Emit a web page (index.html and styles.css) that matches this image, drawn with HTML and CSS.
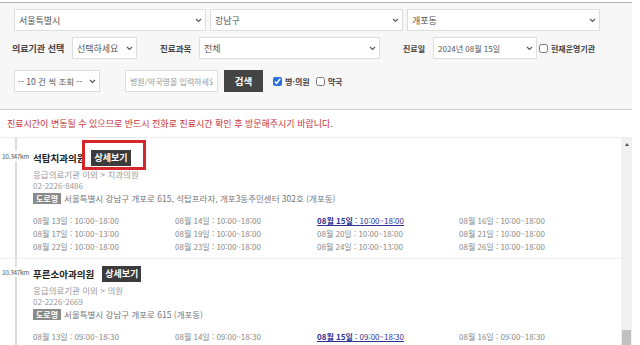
FILE: index.html
```html
<!DOCTYPE html>
<html lang="ko">
  <head>
    <meta charset="UTF-8" />
    <meta name="viewport" content="width=device-width, initial-scale=1.0" />
    <title>진료기관 조회</title>
    <link rel="stylesheet" href="styles.css">
  </head>
  <body>
    <div class="page">
      <div class="filter">
        <div class="row row1">
          <div class="sel w-sido"><span>서울특별시</span><svg class="chev" viewBox="0 0 7 5"><path d="M1 1l2.5 2.5L6 1"/></svg></div>
          <div class="sel w-gu"><span>강남구</span><svg class="chev" viewBox="0 0 7 5"><path d="M1 1l2.5 2.5L6 1"/></svg></div>
          <div class="sel w-dong"><span>개포동</span><svg class="chev" viewBox="0 0 7 5"><path d="M1 1l2.5 2.5L6 1"/></svg></div>
        </div>
        <div class="row row2">
          <label class="lbl lbl-kind">의료기관 선택</label>
          <div class="sel w-kind"><span>선택하세요</span><svg class="chev" viewBox="0 0 7 5"><path d="M1 1l2.5 2.5L6 1"/></svg></div>
          <label class="lbl lbl-dept">진료과목</label>
          <div class="sel w-dept"><span>전체</span><svg class="chev" viewBox="0 0 7 5"><path d="M1 1l2.5 2.5L6 1"/></svg></div>
          <label class="lbl lbl-day">진료일</label>
          <div class="sel w-day"><span>2024년 08월 15일</span><svg class="chev" viewBox="0 0 7 5"><path d="M1 1l2.5 2.5L6 1"/></svg></div>
          <input type="checkbox" class="chk chk-open" id="open" />
          <label class="lbl" for="open">현재운영기관</label>
        </div>
        <div class="row row3">
          <div class="sel w-count"><span>-- 10 건 씩 조회 --</span><svg class="chev" viewBox="0 0 7 5"><path d="M1 1l2.5 2.5L6 1"/></svg></div>
          <input type="text" class="keyword" placeholder="병원/약국명을 입력하세요" />
          <button class="btn">검색</button>
          <input type="checkbox" class="chk chk-hosp" id="hosp" checked />
          <label class="lbl" for="hosp">병·의원</label>
          <input type="checkbox" class="chk chk-pharm" id="pharm" />
          <label class="lbl" for="pharm">약국</label>
        </div>
      </div>

      <p class="notice">진료시간이 변동될 수 있으므로 반드시 전화로 진료시간 확인 후 방문해주시기 바랍니다.</p>

      <div class="listwrap">
        <div class="list">
          <div class="item">
            <div class="head">
              <span class="dist">10.347km</span>
              <span class="name">석탑치과의원</span>
              <span class="mark"><span class="badge">상세보기</span></span>
            </div>
            <div class="info cat">응급의료기관 이외 &gt; 치과의원</div>
            <div class="info">02-2226-8486</div>
            <div class="info addr"><span class="road">도로명</span>서울특별시 강남구 개포로 615, 석탑프라자, 개포3동주민센터 302호 (개포동)</div>
            <div class="sched">
              <span>08월 13일 : 10:00~18:00</span>
              <span>08월 14일 : 10:00~18:00</span>
              <span class="today"><b>08월 15일</b> : 10:00~18:00</span>
              <span>08월 16일 : 10:00~18:00</span>
              <span>08월 17일 : 10:00~13:00</span>
              <span>08월 19일 : 10:00~18:00</span>
              <span>08월 20일 : 10:00~18:00</span>
              <span>08월 21일 : 10:00~18:00</span>
              <span>08월 22일 : 10:00~18:00</span>
              <span>08월 23일 : 10:00~18:00</span>
              <span>08월 24일 : 10:00~13:00</span>
              <span>08월 26일 : 10:00~18:00</span>
            </div>
          </div>
          <div class="item">
            <div class="head">
              <span class="dist">10.347km</span>
              <span class="name">푸른소아과의원</span>
              <span class="badge">상세보기</span>
            </div>
            <div class="info cat">응급의료기관 이외 &gt; 의원</div>
            <div class="info">02-2226-2669</div>
            <div class="info addr"><span class="road">도로명</span>서울특별시 강남구 개포로 615 (개포동)</div>
            <div class="sched">
              <span>08월 13일 : 09:00~18:30</span>
              <span>08월 14일 : 09:00~18:30</span>
              <span class="today"><b>08월 15일</b> : 09:00~18:30</span>
              <span>08월 16일 : 09:00~18:30</span>
              <span>08월 17일 : 09:00~13:00</span>
              <span>08월 19일 : 09:00~18:30</span>
              <span>08월 20일 : 09:00~18:30</span>
              <span>08월 21일 : 09:00~18:30</span>
            </div>
          </div>
        </div>
        <div class="scroll">
          <div class="up"></div>
          <div class="thumb"></div>
        </div>
      </div>
    </div>
  </body>
</html>
```

FILE: styles.css
```css
* {
  box-sizing: border-box;
}
html,
body {
  height: 100%;
  overflow: hidden;
}
body {
  margin: 0;
  background: #fff;
  color: #555;
  font-family: "Noto Sans CJK KR", "Noto Sans", sans-serif;
  font-size: 8px;
}
.page {
  width: 632px;
  padding-top: 2px;
}

/* search filters */
.filter {
  height: 108px;
  padding: 6px 0 0 12px;
  background: #f7f7f7;
  border-top: 1px solid #b4b4b4;
  border-bottom: 1px solid #cfcfcf;
}
.row {
  display: flex;
  align-items: center;
  height: 22px;
}
.row2 {
  margin-top: 6px;
}
.row3 {
  margin-top: 11px;
}
.row1,
.row3 {
  padding-left: 2px;
}
.sel {
  display: flex;
  align-items: center;
  justify-content: space-between;
  height: 22px;
  padding: 0 3px 0 4px;
  background: #fff;
  border: 1px solid #ddd;
  color: #555;
  font-size: 9px;
  white-space: nowrap;
}
.chev {
  flex-shrink: 0;
  width: 7px;
  height: 5px;
  fill: none;
  stroke: #555;
  stroke-width: 1.1;
}
.w-sido {
  width: 192px;
}
.w-gu {
  width: 193px;
  margin-left: 4px;
}
.w-dong {
  width: 193px;
  margin-left: 4px;
}
.lbl {
  color: #444;
  font-weight: bold;
  white-space: nowrap;
}
.lbl-kind {
  width: 60px;
  font-size: 9px;
}
.w-kind {
  width: 65px;
}
.lbl-dept {
  width: 39px;
  margin-left: 23px;
  font-size: 8.5px;
}
.w-dept {
  width: 181px;
}
.lbl-day {
  width: 30px;
  margin-left: 23px;
}
.w-day {
  width: 104px;
  font-size: 8px;
}
.chk {
  width: 9px;
  height: 9px;
  margin: 0 3px 0 2px;
  accent-color: #2a6fdb;
}
.w-count {
  width: 86px;
  padding-left: 3px;
  font-size: 8.5px;
}
.keyword {
  width: 93px;
  height: 22px;
  margin-left: 25px;
  padding: 0 4px;
  border: 1px solid #ddd;
  font-family: inherit;
  font-size: 8px;
}
.keyword::placeholder {
  color: #999;
}
.btn {
  width: 39px;
  height: 22px;
  margin: 0 8px 0 6px;
  background: #444;
  color: #fff;
  border: none;
  font-family: inherit;
  font-size: 9.5px;
  font-weight: bold;
}
.chk-pharm {
  margin-left: 6px;
}

.notice {
  height: 28px;
  margin: 0;
  padding-left: 7px;
  line-height: 27px;
  color: #c8323c;
  font-size: 9px;
  border-bottom: 1px solid #ececec;
}

/* results */
.listwrap {
  display: flex;
  height: 208px;
  overflow: hidden;
}
.list {
  flex: 1;
  background: linear-gradient(to right, transparent 15px, #dcdcdc 15px, #dcdcdc 17px, transparent 17px);
}
.item {
  padding: 11px 0 5px 33px;
  border-bottom: 1px solid #f0f0f0;
}
.item + .item {
  padding-top: 6px;
}
.head {
  display: flex;
  align-items: center;
  height: 18px;
  margin-left: -31px;
}
.dist {
  width: 31px;
  align-self: flex-start;
  margin-top: 2px;
  background: #fff;
  color: #555;
  font-size: 6.5px;
  letter-spacing: -0.3px;
}
.name {
  color: #222;
  font-size: 9.5px;
  font-weight: bold;
}
.badge {
  display: inline-block;
  height: 16px;
  margin-left: 8px;
  padding: 0 3px;
  line-height: 16px;
  background: #3b3b3b;
  color: #fff;
  font-size: 9px;
  font-weight: bold;
}
/* red highlight drawn around the first detail button */
.mark {
  position: relative;
  display: inline-flex;
  margin-left: 6px;
}
.mark .badge {
  margin-left: 0;
}
.mark::after {
  content: "";
  position: absolute;
  top: -10px;
  right: -15px;
  bottom: -4px;
  left: -9px;
  border: 3px solid #d5262b;
}
.info {
  line-height: 12px;
  color: #999;
}
.cat {
  margin-top: 1px;
  font-size: 8.5px;
}
.addr {
  color: #777;
  font-size: 8.5px;
}
.road {
  display: inline-block;
  margin-right: 3px;
  padding: 0 3px;
  line-height: 11px;
  background: #8a8a8a;
  color: #fff;
  font-size: 8px;
  font-weight: bold;
}
.sched {
  display: grid;
  grid-template-columns: repeat(4, 142px);
  margin-top: 10px;
  line-height: 13px;
  color: #888;
  white-space: nowrap;
}
.today {
  color: #2e3192;
  text-decoration: underline;
}

.scroll {
  display: flex;
  flex-direction: column;
  justify-content: space-between;
  width: 11px;
  background: #f1f1f1;
}
.up {
  width: 0;
  height: 0;
  margin: 5px auto 0;
  border-left: 2.5px solid transparent;
  border-right: 2.5px solid transparent;
  border-bottom: 3px solid #555;
}
.thumb {
  height: 16px;
  margin: 0 1px;
  background: #c1c1c1;
}
```
